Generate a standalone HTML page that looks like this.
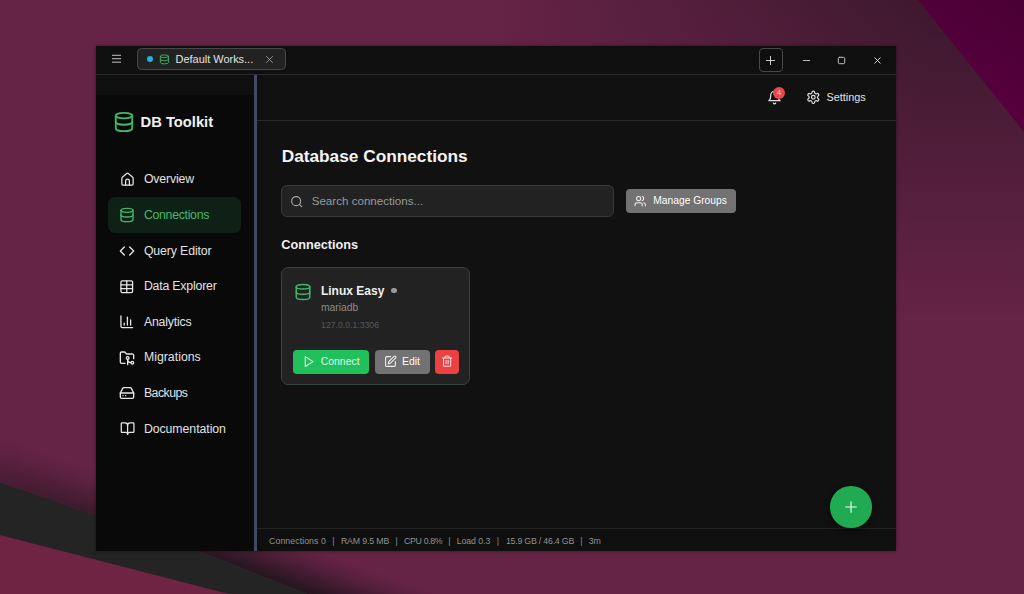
<!DOCTYPE html>
<html lang="en">
<head>
<meta charset="utf-8">
<title>DB Toolkit</title>
<style>
  html, body { margin: 0; padding: 0; }
  body {
    width: 1024px; height: 594px; overflow: hidden; position: relative;
    background: #652346;
    font-family: "Liberation Sans", sans-serif;
    color: #e6e6e6;
  }
  .abs { position: absolute; }
  svg.ic { position: absolute; fill: none; stroke: currentColor; stroke-width: 2; stroke-linecap: round; stroke-linejoin: round; overflow: visible; }
  .t { position: absolute; white-space: nowrap; line-height: 1; }

  /* ---------- wallpaper ---------- */
  #wall { position: absolute; left: 0; top: 0; width: 1024px; height: 594px; }

  /* ---------- window ---------- */
  #win { position: absolute; left: 96px; top: 45.5px; width: 799.5px; height: 505.5px; background: #111111; overflow: hidden; box-shadow: 0 0 3px rgba(0,0,0,0.45); }
  #titlebar { position: absolute; left: 0; top: 0; width: 100%; height: 28.5px; background: #0f0f0f; border-bottom: 1px solid #2b2b2b; }
  #sidebar { position: absolute; left: 0; top: 29.5px; width: 158px; height: 476px; background: #090909; }
  #sidecap { position: absolute; left: 0; top: 0; width: 158px; height: 19.5px; background: #0f0f0f; }
  #divider { position: absolute; left: 158px; top: 29.5px; width: 3px; height: 476px; background: #414a63; }
  #header { position: absolute; left: 161px; top: 29.5px; width: 638.5px; height: 45px; border-bottom: 1px solid #2a2a2a; }
  #status { position: absolute; left: 161px; top: 482.5px; width: 638.5px; height: 23px; border-top: 1px solid #232323; background: #0f0f0f; }
</style>
</head>
<body>

<!-- wallpaper -->
<svg id="wall" viewBox="0 0 1024 594">
  <defs>
    <linearGradient id="gTop" gradientUnits="userSpaceOnUse" x1="500" y1="0" x2="930" y2="60">
      <stop offset="0" stop-color="#652346"/>
      <stop offset="1" stop-color="#3c182e"/>
    </linearGradient>
    <linearGradient id="gFade" gradientUnits="userSpaceOnUse" x1="0" y1="0" x2="0" y2="320">
      <stop offset="0" stop-color="#652346" stop-opacity="0"/>
      <stop offset="1" stop-color="#652346" stop-opacity="1"/>
    </linearGradient>
    <linearGradient id="gMag" gradientUnits="userSpaceOnUse" x1="1024" y1="0" x2="960" y2="100">
      <stop offset="0" stop-color="#4a0034"/>
      <stop offset="1" stop-color="#58003e"/>
    </linearGradient>
    <linearGradient id="gShadow" gradientUnits="userSpaceOnUse" x1="200" y1="551.5" x2="213.6" y2="513.9">
      <stop offset="0" stop-color="#1e151b" stop-opacity="0.86"/>
      <stop offset="0.3" stop-color="#1e151b" stop-opacity="0.56"/>
      <stop offset="0.6" stop-color="#1e151b" stop-opacity="0.26"/>
      <stop offset="0.85" stop-color="#1e151b" stop-opacity="0.07"/>
      <stop offset="1" stop-color="#1e151b" stop-opacity="0"/>
    </linearGradient>
    <linearGradient id="gMaskRamp" gradientUnits="userSpaceOnUse" x1="0" y1="0" x2="230" y2="0">
      <stop offset="0" stop-color="#fff" stop-opacity="0.45"/>
      <stop offset="1" stop-color="#fff" stop-opacity="1"/>
    </linearGradient>
    <mask id="mShadow" maskUnits="userSpaceOnUse" x="0" y="400" width="500" height="200">
      <rect x="0" y="400" width="500" height="200" fill="url(#gMaskRamp)"/>
    </mask>
  </defs>
  <rect width="1024" height="594" fill="#652346"/>
  <rect width="1024" height="594" fill="url(#gTop)"/>
  <rect width="1024" height="594" fill="url(#gFade)"/>
  <polygon points="918,0 1024,0 1024,132" fill="url(#gMag)"/>
  <!-- bottom-left band -->
  <polygon points="0,535 229,594 0,594" fill="#6f2443"/>
  <polygon points="0,430 460,594 307,594 199.6,551.5 95,515 0,482.5" fill="url(#gShadow)" mask="url(#mShadow)"/>
  <polygon points="0,482.5 95,515 199.6,551.5 307,594 229,594 0,535" fill="#242424"/>
</svg>

<div id="win">
  <div id="titlebar">
    <!-- hamburger -->
    <svg class="ic" style="left:15.2px;top:7.3px;width:11px;height:11px;color:#d6d6d6" viewBox="0 0 24 24" stroke-width="2.6"><path d="M3 5h18"/><path d="M3 12.5h18"/><path d="M3 20h18"/></svg>
    <!-- tab -->
    <div class="abs" id="tab" style="left:41.1px;top:2.9px;width:146.6px;height:20.1px;border:1px solid #484848;border-radius:4.5px;background:#222222"></div>
    <div class="abs" style="left:51px;top:10.6px;width:6.2px;height:6.2px;border-radius:50%;background:#1fb4d8"></div>
    <svg class="ic" style="left:62.8px;top:8.3px;width:10.8px;height:10.8px;color:#3fb968" viewBox="0 0 24 24" stroke-width="2.4"><ellipse cx="12" cy="5" rx="9" ry="3"/><path d="M3 5V19A9 3 0 0 0 21 19V5"/><path d="M3 12A9 3 0 0 0 21 12"/></svg>
    <div class="t" style="left:79.6px;top:8.3px;font-size:10.95px;color:#e2e2e2">Default Works...</div>
    <svg class="ic" style="left:169.2px;top:9.4px;width:9px;height:9px;color:#b5b5b5" viewBox="0 0 24 24" stroke-width="2.4"><path d="M20 4 4 20"/><path d="m4 4 16 16"/></svg>
    <!-- new tab button -->
    <div class="abs" style="left:663px;top:2.6px;width:22px;height:21.6px;border:1px solid #484848;border-radius:4px"></div>
    <svg class="ic" style="left:669px;top:9px;width:11px;height:11px;color:#dcdcdc" viewBox="0 0 24 24" stroke-width="2.4"><path d="M3 12h18"/><path d="M12 3v18"/></svg>
    <!-- window controls -->
    <svg class="ic" style="left:705px;top:9px;width:11px;height:11px;color:#c8c8c8" viewBox="0 0 24 24" stroke-width="2.6"><path d="M5 12h14"/></svg>
    <svg class="ic" style="left:740.4px;top:9.2px;width:11px;height:11px;color:#d2d2d2" viewBox="0 0 24 24" stroke-width="2.6"><rect x="5" y="5" width="14" height="14" rx="3"/></svg>
    <svg class="ic" style="left:776px;top:9.1px;width:11px;height:11px;color:#e0e0e0" viewBox="0 0 24 24" stroke-width="2.8"><path d="M18 6 6 18"/><path d="m6 6 12 12"/></svg>
  </div>
  <div id="sidebar"><div id="sidecap"></div>
    <!-- brand -->
    <svg class="ic" style="left:17.3px;top:35.5px;width:22px;height:22px;color:#3fb968" viewBox="0 0 24 24"><ellipse cx="12" cy="5" rx="9" ry="3"/><path d="M3 5V19A9 3 0 0 0 21 19V5"/><path d="M3 12A9 3 0 0 0 21 12"/></svg>
    <div class="t" style="left:44.6px;top:39.5px;font-size:14.72px;font-weight:700;color:#f2f2f2">DB Toolkit</div>
    <svg class="ic" style="left:23.65px;top:96.55px;width:15.0px;height:15.0px;color:#e6e6e6" viewBox="0 0 24 24"><path d="M9 21v-6.5a3 3 0 0 1 6 0V21"/><path d="M3 10a2 2 0 0 1 .709-1.528l7-5.999a2 2 0 0 1 2.582 0l7 5.999A2 2 0 0 1 21 10v9a2 2 0 0 1-2 2H5a2 2 0 0 1-2-2z"/></svg>
    <div class="t" style="left:47.9px;top:98.29px;font-size:12.3px;letter-spacing:-0.146px;color:#e2e2e2">Overview</div>
    <div class="abs" style="left:12.1px;top:122.32px;width:133.3px;height:35.4px;border-radius:7px;background:#0f2117"></div>
    <svg class="ic" style="left:23.15px;top:132.02px;width:16.0px;height:16.0px;color:#45b86e" viewBox="0 0 24 24"><ellipse cx="12" cy="5" rx="9" ry="3"/><path d="M3 5V19A9 3 0 0 0 21 19V5"/><path d="M3 12A9 3 0 0 0 21 12"/></svg>
    <div class="t" style="left:47.9px;top:133.91px;font-size:12.3px;letter-spacing:-0.289px;color:#45b86e">Connections</div>
    <svg class="ic" style="left:23.15px;top:167.64px;width:16.0px;height:16.0px;color:#e6e6e6" viewBox="0 0 24 24"><polyline points="16 18 22 12 16 6"/><polyline points="8 6 2 12 8 18"/></svg>
    <div class="t" style="left:47.9px;top:169.53px;font-size:12.3px;letter-spacing:-0.112px;color:#e2e2e2">Query Editor</div>
    <svg class="ic" style="left:23.40px;top:203.51px;width:15.5px;height:15.5px;color:#e6e6e6" viewBox="0 0 24 24"><path d="M12 3v18"/><rect width="18" height="18" x="3" y="3" rx="2"/><path d="M3 9h18"/><path d="M3 15h18"/></svg>
    <div class="t" style="left:47.9px;top:205.15px;font-size:12.3px;letter-spacing:-0.185px;color:#e2e2e2">Data Explorer</div>
    <svg class="ic" style="left:23.40px;top:239.13px;width:15.5px;height:15.5px;color:#e6e6e6" viewBox="0 0 24 24"><path d="M3 3v16a2 2 0 0 0 2 2h16"/><path d="M18 17V9"/><path d="M13 17V5"/><path d="M8 17v-3"/></svg>
    <div class="t" style="left:47.9px;top:240.77px;font-size:12.3px;letter-spacing:-0.192px;color:#e2e2e2">Analytics</div>
    <svg class="ic" style="left:23.15px;top:274.50px;width:16.0px;height:16.0px;color:#e6e6e6" viewBox="0 0 24 24"><path d="M9 20H4a2 2 0 0 1-2-2V5a2 2 0 0 1 2-2h3.9a2 2 0 0 1 1.69.9l.81 1.2a2 2 0 0 0 1.67.9H20a2 2 0 0 1 2 2v5"/><circle cx="13" cy="12" r="2"/><path d="M18 19c-2.8 0-5-2.2-5-5v8"/><circle cx="20" cy="19" r="2"/></svg>
    <div class="t" style="left:47.9px;top:276.39px;font-size:12.3px;letter-spacing:0.016px;color:#e2e2e2">Migrations</div>
    <svg class="ic" style="left:23.15px;top:310.12px;width:16.0px;height:16.0px;color:#e6e6e6" viewBox="0 0 24 24"><line x1="22" x2="2" y1="12" y2="12"/><path d="M5.45 5.11 2 12v6a2 2 0 0 0 2 2h16a2 2 0 0 0 2-2v-6l-3.45-6.89A2 2 0 0 0 16.76 4H7.24a2 2 0 0 0-1.79 1.11z"/><line x1="6" x2="6.01" y1="16" y2="16"/><line x1="10" x2="10.01" y1="16" y2="16"/></svg>
    <div class="t" style="left:47.9px;top:312.01px;font-size:12.3px;letter-spacing:-0.524px;color:#e2e2e2">Backups</div>
    <svg class="ic" style="left:23.55px;top:346.14px;width:15.2px;height:15.2px;color:#e6e6e6" viewBox="0 0 24 24"><path d="M12 7v14"/><path d="M3 18a1 1 0 0 1-1-1V4a1 1 0 0 1 1-1h5a4 4 0 0 1 4 4 4 4 0 0 1 4-4h5a1 1 0 0 1 1 1v13a1 1 0 0 1-1 1h-6a3 3 0 0 0-3 3 3 3 0 0 0-3-3z"/></svg>
    <div class="t" style="left:47.9px;top:347.63px;font-size:12.3px;letter-spacing:-0.056px;color:#e2e2e2">Documentation</div>
  </div>
  <div id="divider"></div>
  <div id="header">
    <!-- bell: page (767..781, 90..104) => header-local x-257, y-75 -->
    <svg class="ic" style="left:509.7px;top:14.7px;width:15px;height:15px;color:#dedede" viewBox="0 0 24 24"><path d="M6 8a6 6 0 0 1 12 0c0 7 3 9 3 9H3s3-2 3-9"/><path d="M10.3 21a1.94 1.94 0 0 0 3.4 0"/></svg>
    <div class="abs" style="left:515.8px;top:12px;width:12.2px;height:12.2px;border-radius:50%;background:#e5484f"></div>
    <div class="t" style="left:515.8px;top:14.3px;width:12.2px;text-align:center;font-size:8px;color:#ffc9cd">4</div>
    <!-- settings -->
    <svg class="ic" style="left:548.5px;top:14.6px;width:14.6px;height:14.6px;color:#dedede" viewBox="0 0 24 24"><path d="M12.22 2h-.44a2 2 0 0 0-2 2v.18a2 2 0 0 1-1 1.73l-.43.25a2 2 0 0 1-2 0l-.15-.08a2 2 0 0 0-2.73.73l-.22.38a2 2 0 0 0 .73 2.73l.15.1a2 2 0 0 1 1 1.72v.51a2 2 0 0 1-1 1.74l-.15.09a2 2 0 0 0-.73 2.73l.22.38a2 2 0 0 0 2.73.73l.15-.08a2 2 0 0 1 2 0l.43.25a2 2 0 0 1 1 1.73V20a2 2 0 0 0 2 2h.44a2 2 0 0 0 2-2v-.18a2 2 0 0 1 1-1.73l.43-.25a2 2 0 0 1 2 0l.15.08a2 2 0 0 0 2.73-.73l.22-.39a2 2 0 0 0-.73-2.73l-.15-.08a2 2 0 0 1-1-1.74v-.5a2 2 0 0 1 1-1.74l.15-.09a2 2 0 0 0 .73-2.73l-.22-.38a2 2 0 0 0-2.73-.73l-.15.08a2 2 0 0 1-2 0l-.43-.25a2 2 0 0 1-1-1.73V4a2 2 0 0 0-2-2z"/><circle cx="12" cy="12" r="3"/></svg>
    <div class="t" style="left:569.5px;top:16.5px;font-size:10.85px;color:#e2e2e2">Settings</div>
  </div>
  <div id="status">
    <div class="t" style="left:12.1px;top:8.3px;font-size:8.8px;letter-spacing:0.04px;color:#919191">Connections 0</div>
    <div class="t" style="left:75.3px;top:8.3px;font-size:8.8px;color:#8a8a8a">|</div>
    <div class="t" style="left:83.9px;top:8.3px;font-size:8.8px;letter-spacing:-0.16px;color:#919191">RAM 9.5 MB</div>
    <div class="t" style="left:138.6px;top:8.3px;font-size:8.8px;color:#8a8a8a">|</div>
    <div class="t" style="left:147.1px;top:8.3px;font-size:8.8px;letter-spacing:-0.36px;color:#919191">CPU 0.8%</div>
    <div class="t" style="left:191.3px;top:8.3px;font-size:8.8px;color:#8a8a8a">|</div>
    <div class="t" style="left:199.7px;top:8.3px;font-size:8.8px;letter-spacing:-0.08px;color:#919191">Load 0.3</div>
    <div class="t" style="left:239.7px;top:8.3px;font-size:8.8px;color:#8a8a8a">|</div>
    <div class="t" style="left:248.9px;top:8.3px;font-size:8.8px;letter-spacing:-0.22px;color:#919191">15.9 GB / 46.4 GB</div>
    <div class="t" style="left:323.2px;top:8.3px;font-size:8.8px;color:#8a8a8a">|</div>
    <div class="t" style="left:331.7px;top:8.3px;font-size:8.8px;color:#919191">3m</div>
  </div>
  <!-- ===== main content (coords relative to #win = page - (96,45.5)) ===== -->
  <div class="t" style="left:185.7px;top:102.9px;font-size:17.25px;font-weight:700;color:#f4f4f4">Database Connections</div>

  <!-- search -->
  <div class="abs" style="left:185px;top:139.7px;width:330.7px;height:29.6px;border:1px solid #3a3a3a;border-radius:6px;background:#222222"></div>
  <svg class="ic" style="left:193.8px;top:149.1px;width:13.4px;height:13.4px;color:#a8a8a8" viewBox="0 0 24 24"><circle cx="11" cy="11" r="8"/><path d="m21 21-4.3-4.3"/></svg>
  <div class="t" style="left:215.7px;top:149.8px;font-size:11.6px;color:#9a9a9a">Search connections...</div>

  <!-- manage groups -->
  <div class="abs" style="left:529.7px;top:143.6px;width:110.2px;height:23.7px;border-radius:4px;background:#727272"></div>
  <svg class="ic" style="left:538.3px;top:149.7px;width:12.4px;height:12.4px;color:#f0f0f0" viewBox="0 0 24 24"><path d="M16 21v-2a4 4 0 0 0-4-4H6a4 4 0 0 0-4 4v2"/><circle cx="9" cy="7" r="4"/><path d="M22 21v-2a4 4 0 0 0-3-3.870"/><path d="M16 3.130a4 4 0 0 1 0 7.750"/></svg>
  <div class="t" style="left:557.3px;top:150.4px;font-size:10.25px;color:#ffffff">Manage Groups</div>

  <div class="t" style="left:185.3px;top:193.5px;font-size:12.7px;font-weight:700;color:#f0f0f0">Connections</div>

  <!-- card: page (281..470, 267.3..385.3) -->
  <div class="abs" style="left:185px;top:221.8px;width:187px;height:116px;border:1px solid #33443b;border-radius:7px;background:#222222"></div>
  <svg class="ic" style="left:197.7px;top:237.5px;width:18px;height:18px;color:#3fb968" viewBox="0 0 24 24"><ellipse cx="12" cy="5" rx="9" ry="3"/><path d="M3 5V19A9 3 0 0 0 21 19V5"/><path d="M3 12A9 3 0 0 0 21 12"/></svg>
  <div class="t" style="left:224.9px;top:239.0px;font-size:12.03px;font-weight:700;color:#f0f0f0">Linux Easy</div>
  <div class="abs" style="left:295px;top:242px;width:5.7px;height:5.7px;border-radius:50%;background:#9a9a9a"></div>
  <div class="t" style="left:224.9px;top:257.6px;font-size:10.32px;color:#8c8c8c">mariadb</div>
  <div class="t" style="left:225.1px;top:275.9px;font-size:8.69px;color:#585858">127.0.0.1:3306</div>

  <!-- buttons: page y 349.65..373.4 -->
  <div class="abs" style="left:197.4px;top:304.2px;width:76px;height:24px;border-radius:4px;background:#22c05c"></div>
  <svg class="ic" style="left:206.3px;top:309.6px;width:13.2px;height:13.2px;color:#d9fbe3" viewBox="0 0 24 24"><polygon points="6 3 20 12 6 21 6 3"/></svg>
  <div class="t" style="left:224.7px;top:311px;font-size:10.44px;color:#dcfce6">Connect</div>

  <div class="abs" style="left:279.4px;top:304.2px;width:54.3px;height:24px;border-radius:4px;background:#727272"></div>
  <svg class="ic" style="left:287.9px;top:309.3px;width:13px;height:13px;color:#f0f0f0" viewBox="0 0 24 24"><path d="M12 3H5a2 2 0 0 0-2 2v14a2 2 0 0 0 2 2h14a2 2 0 0 0 2-2v-7"/><path d="M18.375 2.625a1 1 0 0 1 3 3l-9.013 9.014a2 2 0 0 1-.853.505l-2.873.84a.5.5 0 0 1-.62-.62l.84-2.873a2 2 0 0 1 .506-.852z"/></svg>
  <div class="t" style="left:306px;top:311px;font-size:10.45px;color:#ffffff">Edit</div>

  <div class="abs" style="left:339.3px;top:304.2px;width:24.1px;height:24px;border-radius:4px;background:#ec4143"></div>
  <svg class="ic" style="left:345.3px;top:309.8px;width:12.2px;height:12.2px;color:#ffe1e3" viewBox="0 0 24 24"><path d="M3 6h18"/><path d="M19 6v14c0 1-1 2-2 2H7c-1 0-2-1-2-2V6"/><path d="M8 6V4c0-1 1-2 2-2h4c1 0 2 1 2 2v2"/><line x1="10" x2="10" y1="11" y2="17"/><line x1="14" x2="14" y1="11" y2="17"/></svg>

  <!-- FAB: page center (850.9,506.9) d=41.5 -->
  <div class="abs" style="left:734.2px;top:440.7px;width:41.5px;height:41.5px;border-radius:50%;background:#20ab52;box-shadow:0 2px 6px rgba(0,0,0,0.45)"></div>
  <svg class="ic" style="left:748px;top:454.5px;width:14px;height:14px;color:#eafdf0" viewBox="0 0 24 24" stroke-width="3.43"><path d="M3 12h18"/><path d="M12 3v18"/></svg>

</div>

</body>
</html>
